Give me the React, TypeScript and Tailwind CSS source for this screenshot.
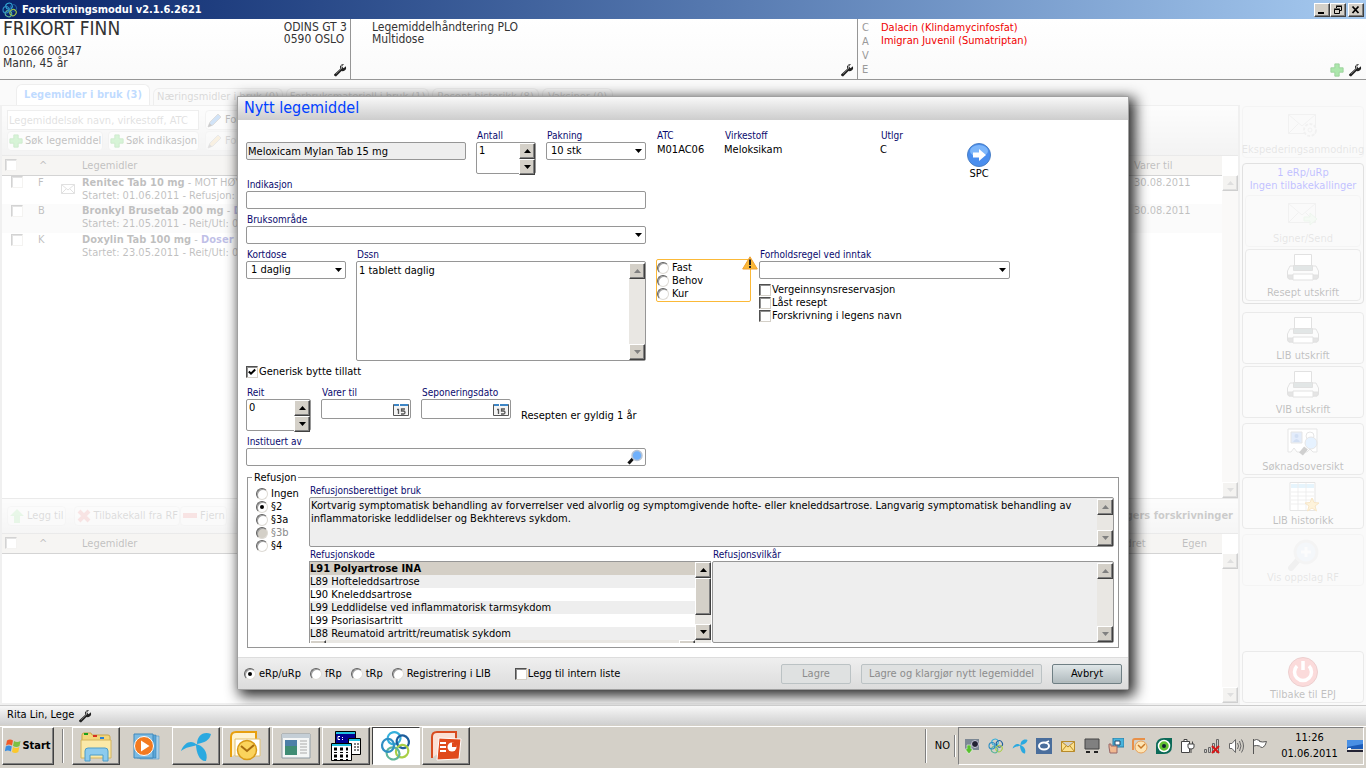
import type { ReactNode } from 'react';

const bevel =
  'border border-t-white border-l-white border-r-[#404040] border-b-[#404040] bg-[#d4d0c8] shadow-[inset_-1px_-1px_0_#808080]';
const box = 'rounded-xs border border-[#969696]';

function Triangle({ down = false, muted = false }: { down?: boolean; muted?: boolean }) {
  return (
    <svg viewBox="0 0 7 4" className="h-1 w-[7px]" fill={muted ? '#808080' : '#000'}>
      <path d={down ? 'M0 0h7L3.5 4z' : 'M0 4h7L3.5 0z'} />
    </svg>
  );
}

function ArrowButton({ down = false, muted = false, label }: { down?: boolean; muted?: boolean; label: string }) {
  return (
    <button type="button" aria-label={label} className={`flex h-4 w-4 shrink-0 items-center justify-center ${bevel}`}>
      <Triangle down={down} muted={muted} />
    </button>
  );
}

function ScrollBar({ thumb = false, muted = false }: { thumb?: boolean; muted?: boolean }) {
  return (
    <div className="flex w-4 shrink-0 flex-col justify-between bg-[#e9e7e3]">
      <div>
        <ArrowButton muted={muted} label="Rull opp" />
        {thumb && <div className={`h-[37px] w-4 ${bevel}`} />}
      </div>
      <ArrowButton down muted={muted} label="Rull ned" />
    </div>
  );
}

function Field({ id, label, className = '', children }: { id?: string; label: string; className?: string; children: ReactNode }) {
  return (
    <div className={`flex flex-col ${className}`}>
      <label htmlFor={id} className="h-[13px] pl-px text-[10px] leading-[13px] whitespace-nowrap text-[#0a0a6e]">
        {label}
      </label>
      {children}
    </div>
  );
}

function Combo({ id, value = '' }: { id: string; value?: string }) {
  return (
    <div className="relative">
      <select id={id} className={`block h-[18px] w-full appearance-none bg-white pl-1 leading-4 ${box}`}>
        <option>{value}</option>
      </select>
      <span className="pointer-events-none absolute inset-y-0 right-1 flex items-center">
        <Triangle down />
      </span>
    </div>
  );
}

function Spinner({ id, value }: { id: string; value: string }) {
  return (
    <div className={`flex h-8 bg-white ${box}`}>
      <input id={id} defaultValue={value} className="h-4 w-0 flex-1 pl-0.5 leading-4 outline-none" />
      <div className="flex flex-col">
        <ArrowButton label="Opp" />
        <ArrowButton down label="Ned" />
      </div>
    </div>
  );
}

function DateInput({ id }: { id: string }) {
  return (
    <div className={`flex h-5 items-center bg-white pr-px ${box}`}>
      <input id={id} className="h-4 w-0 flex-1 outline-none" />
      <svg viewBox="0 0 16 13" className="h-[13px] w-4">
        <path d="M.5 1.500h15v11H.5z" fill="#f4f4f4" stroke="#555" />
        <path d="M1 1h14v2H1z" fill="#3d86c6" />
        <path d="M6 0h1v3H6z" fill="#fff" />
        <path d="M4 6.500h1.500V11M12 6H8.500v2h2q1.500 0 1.500 1.500T10.500 11H8" fill="none" stroke="#555" strokeWidth="1.300" />
      </svg>
    </div>
  );
}

function Radio({ name, label, checked, disabled }: { name: string; label: string; checked?: boolean; disabled?: boolean }) {
  return (
    <label className={`flex h-[13px] items-center gap-[3px] leading-[13px] whitespace-nowrap ${disabled ? 'text-[#8a8a8a]' : ''}`}>
      <span className="grid place-items-center">
        <input
          type="radio"
          name={name}
          defaultChecked={checked}
          disabled={disabled}
          className="peer col-start-1 row-start-1 h-3 w-3 appearance-none rounded-full border border-t-[#606060] border-r-[#dedbd5] border-b-[#dedbd5] border-l-[#606060] bg-white shadow-[inset_1px_1px_0_#a0a0a0] disabled:bg-[#d4d0c8]"
        />
        <span className="pointer-events-none col-start-1 row-start-1 hidden h-1 w-1 rounded-full bg-black peer-checked:block" />
      </span>
      {label}
    </label>
  );
}

function Check({ label, checked }: { label?: string; checked?: boolean }) {
  return (
    <label className="flex h-[13px] items-center gap-px leading-[13px] whitespace-nowrap">
      <span className="grid place-items-center">
        <input
          type="checkbox"
          defaultChecked={checked}
          aria-label={label ?? 'Velg'}
          className="peer col-start-1 row-start-1 h-3 w-3 appearance-none border border-t-[#505050] border-r-[#d4d0c8] border-b-[#d4d0c8] border-l-[#505050] bg-white shadow-[inset_1px_1px_0_#909090]"
        />
        <svg viewBox="0 0 8 8" className="pointer-events-none col-start-1 row-start-1 hidden h-2 w-2 peer-checked:block">
          <path d="M.8 3.500 3 5.700 7.200 1.500" fill="none" stroke="#000" strokeWidth="2" />
        </svg>
      </span>
      {label}
    </label>
  );
}

/* icons */

function Wrench() {
  return (
    <svg viewBox="0 0 14 14" className="h-3.5 w-3.5 shrink-0">
      <path d="M1 11.500 7 6q-.6-3.200 1.500-4.500L11 1 9 3.500l1.500 1.700L13 3.300q.6 2.500-1 4-1.600 1.200-3.500.7L3 13.500q-2.300-.3-2-2z" fill="#222" />
      <path d="m8 6 1-4" stroke="#bbb" />
      <path d="m3 11 5-5" stroke="#666" />
    </svg>
  );
}

function Plus({ className = 'h-3.5 w-3.5' }: { className?: string }) {
  return (
    <svg viewBox="0 0 16 16" className={className}>
      <path d="M5.500 1h5v4.500H15v5h-4.500V15h-5v-4.500H1v-5h4.500z" fill="#5fd45f" stroke="#3aa83a" />
    </svg>
  );
}

function Knot({ className }: { className: string }) {
  const loops = ['#35b0dc', '#1d5d9c', '#a9cf46', '#5fb59a', '#2f8fc4'];
  return (
    <svg viewBox="0 0 32 32" className={className} fill="none" strokeWidth="2.200">
      {loops.map((color, i) => (
        <g key={color} transform={`rotate(${i * 72 - 14} 16 16)`}>
          <ellipse cx="16" cy="8" rx="6.500" ry="6" stroke={color} />
        </g>
      ))}
    </svg>
  );
}

function Telenor({ className }: { className: string }) {
  return (
    <svg viewBox="0 0 32 32" className={className} fill="#2aa9e0">
      <path d="M17 15C12 9 4 12 1 21c5-4 10-4 16-6z" />
      <path d="M17 14C17 6 23 1 31 4c-1 6-7 9-14 10z" />
      <path d="M16 14c6 1 13 8 10 17-6 1-10-8-10-17z" />
    </svg>
  );
}

function Pencil({ color }: { color: string }) {
  return (
    <svg viewBox="0 0 16 16" className="h-4 w-4">
      <path d="m1 15 2-5 8-8 3 3-8 8z" fill={color} stroke="#777" />
      <path d="m1 15 1.500-4L5 13.500z" fill="#333" />
    </svg>
  );
}

function Envelope({ kind }: { kind: 'gear' | 'send' }) {
  return (
    <svg viewBox="0 0 32 28" className="h-7 w-8" fill="none" stroke="#888">
      <path d="M1.500 3.500h27v19h-27zM1.500 3.500 15 15l13.500-11.500M1.500 22.500l10-10M28.500 22.500l-10-10" />
      {kind === 'gear' ? (
        <g fill="#eee">
          <circle cx="23" cy="19" r="6" strokeDasharray="3 1.500" strokeWidth="2" />
          <circle cx="23" cy="19" r="2" />
        </g>
      ) : (
        <path d="M17 17h6v-4l7 6-7 6v-4h-6z" fill="#b0e8b0" stroke="#60b960" />
      )}
    </svg>
  );
}

function Printer() {
  return (
    <svg viewBox="0 0 32 27" className="h-[27px] w-8" stroke="#888">
      <path d="M3 12h26l2.500 5v6q0 2-2 2h-27q-2 0-2-2v-6z" fill="#f4f4f4" />
      <path d="M1 21h6v4H2zM25 21h6l-1 4h-5z" fill="#999" />
      <path d="M7.500.5h17v12h-17z" fill="#fff" />
      <path d="M6.500 11.500h19v5h-19z" fill="#8b9b9b" />
      <path d="M6 20h20v6H6z" fill="#fff" />
    </svg>
  );
}

function Badge() {
  return (
    <svg viewBox="0 0 32 28" className="h-7 w-8" stroke="#999">
      <path d="M1 1h29v23h-4l-3-3-3 3H10l-3-4-3 4H1z" fill="#fff" />
      <path d="M4 4h11v11H4z" fill="#8fb4ee" />
      <circle cx="9.500" cy="8" r="2" fill="#4b7fd0" stroke="none" />
      <path d="M6 14q3.500-6 7 0z" fill="#4b7fd0" stroke="none" />
      <circle cx="23" cy="8" r="4" fill="none" />
      <circle cx="24" cy="15" r="6" fill="#9ccbff" />
      <path d="m19 20-5 6" stroke="#444" strokeWidth="5" />
    </svg>
  );
}

function History() {
  return (
    <svg viewBox="0 0 32 30" className="h-[30px] w-8" stroke="#999">
      <path d="M3 .5h25v28H3z" fill="#fff" />
      <path d="M4 2h23v4H4z" fill="#9cd4f4" stroke="none" />
      <path d="M11 1v27M19 1v27M4 10h23M4 14h23M4 18h23M4 22h23" stroke="#bbb" />
      <path d="m25 16 2 4.500 5 .5-4 3 1.500 5-4.500-3-4.500 3 1.500-5-4-3 5-.5z" fill="#fbd070" stroke="#e09a20" />
    </svg>
  );
}

function Lookup() {
  return (
    <svg viewBox="0 0 32 32" className="h-8 w-8">
      <path d="m12 20-8 9" stroke="#777" strokeWidth="6" strokeLinecap="round" />
      <circle cx="19" cy="13" r="11" fill="#a8c4f0" stroke="#aaa" strokeWidth="3" />
      <path d="M19 8v10M14 13h10" stroke="#fff" strokeWidth="3" />
    </svg>
  );
}

function Power() {
  return (
    <svg viewBox="0 0 32 32" className="h-8 w-8" fill="none">
      <circle cx="16" cy="16" r="14.500" fill="#f07070" stroke="#b04040" />
      <path d="M10 10a8.500 8.500 0 1 0 12 0M16 5v9" stroke="#fff" strokeWidth="3.500" />
    </svg>
  );
}

/* window parts */

function TitleBar() {
  const btn = `flex h-3.5 w-4 items-center justify-center ${bevel}`;
  return (
    <div className="flex h-[19px] items-center bg-linear-to-r from-[#0a246a] to-[#a6caf0] pr-0.5 pl-0.5 text-white">
      <Knot className="h-4 w-4" />
      <h1 className="flex-1 pl-1 text-[11px] leading-4 font-bold">Forskrivningsmodul v2.1.6.2621</h1>
      <button type="button" aria-label="Minimer" className={btn}>
        <svg viewBox="0 0 10 10" className="h-2.5 w-2.5"><path d="M1 7h6v2H1z" /></svg>
      </button>
      <button type="button" aria-label="Gjenopprett" className={btn}>
        <svg viewBox="0 0 10 10" className="h-2.5 w-2.5" fill="none" stroke="#000">
          <path d="M3.500 3V1.500h5v4H7M3 1h6M1.500 4.500h5v4h-5zM1 4h6" />
        </svg>
      </button>
      <button type="button" aria-label="Lukk" className={`ml-0.5 ${btn}`}>
        <svg viewBox="0 0 10 10" className="h-2.5 w-2.5" stroke="#000" strokeWidth="1.800"><path d="m1.500 1.500 6 6.500M7.500 1.500 1.500 8" /></svg>
      </button>
    </div>
  );
}

function PatientHeader() {
  return (
    <header className="flex h-[61px] border-b border-[#969696] bg-linear-to-b from-white to-[#fafafa] text-[12px] leading-3 text-[#333]">
      <div className="flex w-[351px] justify-between border-r border-[#969696] pr-[3px] pl-[3px]">
        <div>
          <h2 className="text-[19px] leading-[18px]">FRIKORT FINN</h2>
          <p className="pt-2">010266 00347</p>
          <p>Mann, 45 år</p>
        </div>
        <div className="flex flex-col items-end justify-between pt-0.5 pb-0.5">
          <p>ODINS GT 3<br />0590 OSLO</p>
          <Wrench />
        </div>
      </div>
      <div className="flex w-[507px] items-end justify-between border-r border-[#969696] pr-[3px] pb-0.5 pl-[21px]">
        <p className="self-start pt-0.5">Legemiddelhåndtering PLO<br />Multidose</p>
        <Wrench />
      </div>
      <div className="flex flex-1 gap-[11px] pr-1 pl-1 text-[11px]">
        <div className="flex w-2 flex-col pt-0.5 leading-3.5 text-[#999]">
          <span>C</span><span>A</span><span>V</span><span>E</span>
        </div>
        <p className="flex-1 pt-0.5 leading-[13px] text-[#f00000]">
          Dalacin (Klindamycinfosfat)<br />Imigran Juvenil (Sumatriptan)
        </p>
        <div className="flex items-end gap-1 pb-0.5">
          <Plus className="h-3.5 w-3.5 opacity-50" />
          <Wrench />
        </div>
      </div>
    </header>
  );
}

const tabs = [
  { label: 'Næringsmidler i bruk (0)', width: 'w-[130px]' },
  { label: 'Forbruksmateriell i bruk (1)', width: 'w-[143px]' },
  { label: 'Resept historikk (8)', width: 'w-[107px]' },
  { label: 'Vaksiner (0)', width: 'w-[71px]' },
];

const drugs = [
  { type: 'F', name: 'Renitec Tab 10 mg', extra: 'MOT HØYT', line: 'Startet: 01.06.2011 - Refusjon:', until: '30.08.2011', mail: true },
  { type: 'B', name: 'Bronkyl Brusetab 200 mg', dose: 'Doser', line: 'Startet: 21.05.2011 - Reit/Utl: 0', until: '30.08.2011' },
  { type: 'K', name: 'Doxylin Tab 100 mg', dose: 'Doser', line: 'Startet: 23.05.2011 - Reit/Utl: 0', until: '' },
];

type Column = { title: string; width: string };

function DrugTable({ rows, last }: { rows: typeof drugs; last: Column[] }) {
  return (
    <table className="w-full table-fixed text-left leading-[13px]">
      <colgroup>
        <col className="w-[33px]" />
        <col className="w-[26px]" />
        <col className="w-[19px]" />
        <col />
        {last.map((c) => <col key={c.title} className={c.width} />)}
      </colgroup>
      <thead>
        <tr className="h-[19px] border-b border-[#555] bg-[#dcd8d0]">
          <th className="pl-[3px]"><Check /></th>
          <th className="pl-1 font-normal">^</th>
          <th />
          <th className="pl-0.5 font-normal">Legemidler</th>
          {last.map((c) => <th key={c.title} className="pl-1 font-normal">{c.title}</th>)}
        </tr>
      </thead>
      <tbody>
        {rows.map((d, i) => (
          <tr key={d.name} className={`h-[29px] align-top ${i % 2 ? 'bg-[#eee]' : 'bg-white'}`}>
            <td className="pl-[9px]"><Check /></td>
            <td className="pl-[3px]">{d.type}</td>
            <td className="pt-2">
              {d.mail && (
                <svg viewBox="0 0 14 10" className="h-2.5 w-3.5" fill="none" stroke="#888"><path d="M.5.5h13v9H.5zL7 6 13.500.5M.5 9.500 5 5M13.500 9.500 9 5" /></svg>
              )}
            </td>
            <td className="overflow-hidden pl-0.5 whitespace-nowrap">
              <b>{d.name}</b> - {d.extra}<b className="text-[#0000a0]">{d.dose}</b>
              <br />{d.line}
            </td>
            {last.map((c) => <td key={c.title} className="pl-1">{d.until}</td>)}
          </tr>
        ))}
      </tbody>
    </table>
  );
}

function ToolButton({ icon, children, muted = false }: { icon: ReactNode; children: ReactNode; muted?: boolean }) {
  return (
    <button type="button" className={`flex h-5 items-center gap-0.5 rounded-sm border border-[#ccc] bg-[#f4f4f4] px-px whitespace-nowrap ${muted ? 'opacity-50' : ''}`}>
      {icon}{children}
    </button>
  );
}

function MedicationPanel() {
  return (
    <div className="flex min-w-0 flex-1 flex-col">
      <div className="flex items-end gap-[3px] pl-4">
        <button type="button" className="h-[21px] w-[134px] rounded-t-md border border-b-0 border-[#bbb] bg-white text-[11px] font-bold whitespace-nowrap text-[#0070ff]">
          Legemidler i bruk (3)
        </button>
        {tabs.map((t) => (
          <button key={t.label} type="button" className={`h-[17px] rounded-t-md border border-b-0 border-[#bbb] text-[11px] leading-4 whitespace-nowrap text-[#666] ${t.width}`}>
            {t.label}
          </button>
        ))}
      </div>
      <div className="flex flex-1 flex-col border-x-2 border-t border-b-2 border-[#c4c4c4] bg-white">
        <div className="flex h-[49px] gap-1.5 bg-linear-to-b from-[#f4f4f4] to-[#d0d0d0] pt-1 pl-[5px]">
          <div className="flex w-48 flex-col gap-px">
            <input placeholder="Legemiddelsøk navn, virkestoff, ATC" aria-label="Legemiddelsøk" className="h-5 w-full border border-[#bbb] bg-white pl-px placeholder:text-[#888]" />
            <div className="flex justify-between">
              <ToolButton icon={<Plus />}>Søk legemiddel</ToolButton>
              <ToolButton icon={<Plus />}>Søk indikasjon</ToolButton>
            </div>
          </div>
          <div className="flex flex-col gap-px">
            <ToolButton icon={<Pencil color="#4a90e0" />}>Forny</ToolButton>
            <ToolButton muted icon={<Pencil color="#f0b040" />}>Forny</ToolButton>
          </div>
        </div>
        <div className="flex h-[343px] border-t border-[#aaa]">
          <div className="min-w-0 flex-1"><DrugTable rows={drugs} last={[{ title: 'Varer til', width: 'w-[92px]' }]} /></div>
          <div className="flex pt-[19px]"><ScrollBar muted /></div>
        </div>
        <div className="flex h-[35px] items-center gap-2 border-t border-[#aaa] bg-linear-to-b from-[#f4f4f4] to-[#d8d8d8] px-[5px]">
          <ToolButton muted icon={<svg viewBox="0 0 16 16" className="h-4 w-4"><path d="m8 1 7 7h-4v7H5V8H1z" fill="#5fd45f" /></svg>}>Legg til</ToolButton>
          <div className="flex">
            <ToolButton muted icon={<svg viewBox="0 0 16 16" className="h-4 w-4"><path d="m3 3 10 10M13 3 3 13" stroke="#e04040" strokeWidth="4" /></svg>}>Tilbakekall fra RF</ToolButton>
            <ToolButton muted icon={<svg viewBox="0 0 16 16" className="h-4 w-4"><path d="M1 5h14v5H1z" fill="#e04040" /></svg>}>Fjern</ToolButton>
          </div>
          <b className="ml-auto text-[11px] text-[#333]">Andre legers forskrivninger</b>
        </div>
        <div className="flex flex-1 border-t border-[#aaa]">
          <div className="min-w-0 flex-1">
            <DrugTable rows={[]} last={[{ title: 'Endret', width: 'w-[69px]' }, { title: 'Egen', width: 'w-[44px]' }]} />
          </div>
          <div className="flex pt-[19px]"><ScrollBar muted /></div>
        </div>
      </div>
    </div>
  );
}

function SideButton({ icon, label, muted = false }: { icon: ReactNode; label: string; muted?: boolean }) {
  return (
    <button type="button" className={`flex h-[52px] w-full flex-col items-center justify-between rounded-sm border border-[#aaa] bg-[#f0f0f0] pt-1 pb-px leading-[13px] whitespace-nowrap ${muted ? 'opacity-35' : ''}`}>
      {icon}
      <span>{label}</span>
    </button>
  );
}

function SideBar() {
  return (
    <div className="flex w-[122px] flex-col pt-[22px] pb-0.5">
      <SideButton muted icon={<Envelope kind="gear" />} label="Ekspederingsanmodning" />
      <div className="mt-[5px] rounded-sm border border-[#888] p-0.5">
        <p className="pb-[3px] text-center leading-[13px] whitespace-nowrap text-[#0000ff]">1 eRp/uRp<br />Ingen tilbakekallinger</p>
        <div className="flex flex-col gap-0.5">
          <SideButton muted icon={<Envelope kind="send" />} label="Signer/Send" />
          <SideButton icon={<Printer />} label="Resept utskrift" />
        </div>
      </div>
      <div className="mt-2 flex flex-col gap-0.5">
        <SideButton icon={<Printer />} label="LIB utskrift" />
        <SideButton icon={<Printer />} label="VIB utskrift" />
      </div>
      <div className="mt-[5px] flex flex-col gap-0.5">
        <SideButton icon={<Badge />} label="Søknadsoversikt" />
        <SideButton icon={<History />} label="LIB historikk" />
      </div>
      <div className="mt-[5px]"><SideButton muted icon={<Lookup />} label="Vis oppslag RF" /></div>
      <div className="mt-auto"><SideButton icon={<Power />} label="Tilbake til EPJ" /></div>
    </div>
  );
}

const codes = [
  'L91 Polyartrose INA',
  'L89 Hofteleddsartrose',
  'L90 Kneleddsartrose',
  'L99 Leddlidelse ved inflammatorisk tarmsykdom',
  'L99 Psoriasisartritt',
  'L88 Reumatoid artritt/reumatisk sykdom',
];

function Refund() {
  return (
    <fieldset className="mt-px ml-px flex min-w-0 border border-[#969696] pr-1 pb-1">
      <legend className="ml-1 px-0.5 leading-[13px]">Refusjon</legend>
      <div className="flex w-[61px] shrink-0 flex-col pt-[3px] pl-2">
        <Radio name="refusjon" label="Ingen" />
        <Radio name="refusjon" label="§2" checked />
        <Radio name="refusjon" label="§3a" />
        <Radio name="refusjon" label="§3b" disabled />
        <Radio name="refusjon" label="§4" />
      </div>
      <div className="flex min-w-0 flex-1 flex-col gap-px">
        <Field id="bruk" label="Refusjonsberettiget bruk">
          <div className={`flex h-[50px] bg-[#eee] pt-px ${box}`}>
            <textarea
              id="bruk"
              readOnly
              className="min-w-0 flex-1 resize-none overflow-hidden pl-px leading-[13px] outline-none"
              defaultValue="Kortvarig symptomatisk behandling av forverrelser ved alvorlig og symptomgivende hofte- eller kneleddsartrose. Langvarig symptomatisk behandling av inflammatoriske leddlidelser og Bekhterevs sykdom."
            />
            <ScrollBar muted />
          </div>
        </Field>
        <div className="flex gap-px">
          <Field label="Refusjonskode" className="min-w-0 flex-1">
            <div className="h-[82px] overflow-hidden border-t border-l border-[#969696]">
              <div className="flex">
                <ul className="min-w-0 flex-1 leading-[13px] whitespace-nowrap">
                  {codes.map((code, i) => (
                    <li key={code} className={i === 0 ? 'bg-[#d4cfc6] font-bold' : i % 2 ? 'bg-[#eee]' : 'bg-white'}>{code}</li>
                  ))}
                </ul>
                <ScrollBar thumb />
              </div>
              <div className="flex justify-between bg-[#e9e7e3] pr-4">
                <div className={`h-4 w-4 ${bevel}`} />
                <div className={`h-4 w-4 ${bevel}`} />
              </div>
            </div>
          </Field>
          <Field id="vilkar" label="Refusjonsvilkår" className="min-w-0 flex-1">
            <div className={`flex h-[82px] bg-[#eee] pt-px ${box}`}>
              <textarea id="vilkar" readOnly className="min-w-0 flex-1 resize-none outline-none" />
              <ScrollBar muted />
            </div>
          </Field>
        </div>
      </div>
    </fieldset>
  );
}

function Dialog() {
  const footBtn = 'h-5 rounded-xs border text-center leading-4 whitespace-nowrap';
  return (
    <section
      role="dialog"
      aria-label="Nytt legemiddel"
      className="w-[892px] rounded-b-xs border border-[#a0a0a0] bg-white shadow-[4px_4px_14px_2px_rgba(0,0,0,0.85)]">
      <h2 className="h-[23px] bg-linear-to-b from-[#f8f8f8] to-[#cdcdcd] pl-1.5 text-[16px] leading-[21px] text-[#0040ff]">
        Nytt legemiddel
      </h2>

      <div className="flex flex-col gap-1 pt-[9px] pr-[9px] pb-[9px] pl-2">
        <div className="flex h-[45px] items-start gap-2.5">
          <input aria-label="Legemiddel" readOnly defaultValue="Meloxicam Mylan Tab 15 mg" className={`mt-[13px] h-[18px] w-[220px] bg-[#eee] pl-px ${box}`} />
          <Field id="antall" label="Antall" className="w-[60px]"><Spinner id="antall" value="1" /></Field>
          <Field id="pakning" label="Pakning" className="w-[100px]"><Combo id="pakning" value="10 stk" /></Field>
          <Field label="ATC" className="w-[58px]"><p className="pl-px leading-4">M01AC06</p></Field>
          <Field label="Virkestoff" className="w-[146px]"><p className="leading-4">Meloksikam</p></Field>
          <Field label="Utlgr" className="w-[77px]"><p className="leading-4">C</p></Field>
          <button type="button" className="mt-3.5 flex flex-col items-center leading-[14px]">
            <svg viewBox="0 0 24 24" className="h-6 w-6">
              <circle cx="12" cy="12" r="11.500" fill="#4a8eee" stroke="#4a7fc4" />
              <ellipse cx="12" cy="8" rx="9" ry="6" fill="#7db6fa" />
              <path d="M6 9.500h6V6l7 6-7 6v-3.500H6z" fill="#fff" />
            </svg>
            SPC
          </button>
        </div>
        <Field id="indikasjon" label="Indikasjon" className="w-[400px]">
          <input id="indikasjon" className={`h-[18px] ${box}`} />
        </Field>
        <Field id="omrade" label="Bruksområde" className="w-[400px]"><Combo id="omrade" /></Field>

        <div className="flex gap-2.5">
          <Field id="kortdose" label="Kortdose" className="w-[100px]"><Combo id="kortdose" value="1 daglig" /></Field>
          <Field id="dssn" label="Dssn" className="w-[290px]">
            <div className={`flex h-[100px] pt-px ${box}`}>
              <textarea id="dssn" defaultValue="1 tablett daglig" className="min-w-0 flex-1 resize-none pl-0.5 leading-4 outline-none" />
              <ScrollBar muted />
            </div>
          </Field>
          <div className="flex gap-2">
            <div className="relative mt-[11px] flex h-[43px] w-[95px] flex-col rounded-xs border border-[#fbb938] pt-px">
              <Radio name="type" label="Fast" />
              <Radio name="type" label="Behov" />
              <Radio name="type" label="Kur" />
              <svg viewBox="0 0 16 14" className="absolute -top-1 -right-2 h-3.5 w-4">
                <path d="M8 .8 15.300 13H.7z" fill="#fbb938" stroke="#f0a030" strokeLinejoin="round" />
                <path d="M8 3.500v5.500M8 10v2" stroke="#222" strokeWidth="2" />
              </svg>
            </div>
            <div>
              <Field id="forhold" label="Forholdsregel ved inntak" className="w-[251px]"><Combo id="forhold" /></Field>
              <div className="pt-1">
                <Check label="Vergeinnsynsreservasjon" />
                <Check label="Låst resept" />
                <Check label="Forskrivning i legens navn" />
              </div>
            </div>
          </div>
        </div>

        <Check label="Generisk bytte tillatt" checked />

        <div className="flex gap-2.5 pt-1">
          <Field id="reit" label="Reit" className="w-[65px]"><Spinner id="reit" value="0" /></Field>
          <Field id="varer" label="Varer til" className="w-[90px]"><DateInput id="varer" /></Field>
          <Field id="sepo" label="Seponeringsdato" className="w-[90px]"><DateInput id="sepo" /></Field>
          <p className="pt-[23px] leading-[14px]">Resepten er gyldig 1 år</p>
        </div>
        <Field id="instituert" label="Instituert av" className="w-[400px]">
          <div className={`flex h-[18px] items-center pr-0.5 ${box}`}>
            <input id="instituert" className="h-4 flex-1 outline-none" />
            <svg viewBox="0 0 16 16" className="h-4 w-4">
              <path d="m6.500 9-5 5.500" stroke="#111" strokeWidth="3" />
              <circle cx="10" cy="6.500" r="5" fill="#6fb0fb" stroke="#b8c4d4" strokeWidth="1.500" />
            </svg>
          </div>
        </Field>
        <Refund />
      </div>

      <div className="flex h-8 items-center border-t border-[#ddd] bg-linear-to-b from-[#efefef] to-[#dcdcdc] pr-1.5 pl-1.5">
        <div className="flex gap-[9px]">
          <Radio name="resept" label="eRp/uRp" checked />
          <Radio name="resept" label="fRp" />
          <Radio name="resept" label="tRp" />
          <Radio name="resept" label="Registrering i LIB" />
        </div>
        <div className="pl-6"><Check label="Legg til intern liste" /></div>
        <div className="ml-auto flex gap-2.5">
          <button type="button" className={`w-[70px] border-[#bbc2c4] bg-[#dfe1e1] text-[#8c8c8c] ${footBtn}`}>Lagre</button>
          <button type="button" className={`w-[181px] border-[#bbc2c4] bg-[#dfe1e1] text-[#8c8c8c] ${footBtn}`}>Lagre og klargjør nytt legemiddel</button>
          <button type="button" className={`w-[70px] border-[#6f7f84] bg-linear-to-b from-[#dfe6e8] to-[#b0babd] ${footBtn}`}>Avbryt</button>
        </div>
      </div>
    </section>
  );
}

const taskIcons: { name: string; state?: 'flat' | 'active'; icon: ReactNode }[] = [
  {
    name: 'Explorer',
    icon: (
      <svg viewBox="0 0 32 32" className="h-8 w-8">
        <path d="M2 5q0-2 2-2h7l1 2h16q2 0 2 2v20H2z" fill="#f3d67a" stroke="#c9a54a" />
        <path d="M1 10h30v18H1z" fill="#fbe9a8" stroke="#d4b45c" />
        <path d="M4 3h4v2H4z" fill="#1ca01c" /><path d="M13 5h4v2h-4z" fill="#d83020" /><path d="M20 7h4v2h-4z" fill="#2880d8" />
        <path d="M5 31V21q0-3 3-3h17q3 0 3 3v10h-5v-6H10v6z" fill="#8ccbee" stroke="#4c9cc8" />
      </svg>
    ),
  },
  {
    name: 'Media Player',
    state: 'flat',
    icon: (
      <svg viewBox="0 0 32 32" className="h-8 w-8">
        <path d="M10 6h19v23H10z" fill="#a8d0ea" stroke="#3f88bc" strokeWidth=".5" /><path d="M7 5h19v23H7z" fill="#5ba6d8" stroke="#2f78ac" strokeWidth=".5" />
        <path d="M4 4h19v24H4z" fill="#7cbbe2" stroke="#3f88bc" />
        <circle cx="14" cy="16" r="9.500" fill="#f37a20" stroke="#fff" /><path d="M11 10.500v11l8.500-5.500z" fill="#fff" />
      </svg>
    ),
  },
  { name: 'Telenor', icon: <Telenor className="h-8 w-8" /> },
  {
    name: 'Outlook',
    icon: (
      <svg viewBox="0 0 32 32" className="h-8 w-8">
        <path d="M1 27V7q0-5 5-5h20v8" fill="#fff3d0" stroke="#e8a010" strokeWidth="2" />
        <path d="M5 9h25v17H5z" fill="#fff" stroke="#e0c070" />
        <circle cx="17" cy="20" r="9.500" fill="#fbd35c" stroke="#d89a18" strokeWidth="1.500" />
        <path d="m11 16 6 5 7-6" fill="none" stroke="#a86c10" strokeWidth="2" />
      </svg>
    ),
  },
  {
    name: 'Program',
    icon: (
      <svg viewBox="0 0 32 32" className="h-8 w-8">
        <path d="M2 4h28v24H2z" fill="#f4f6f6" stroke="#8f9ba4" /><path d="M2 4h28v4H2z" fill="#c4ced6" />
        <path d="M5 10h12v15H5z" fill="#3f8c74" /><path d="M5 10h12v6H5z" fill="#4d7fa8" />
        <path d="M20 11h7M20 14h7M20 17h7M20 20h7M20 23h7" stroke="#aaa" />
      </svg>
    ),
  },
  {
    name: 'Kommandolinje',
    icon: (
      <svg viewBox="0 0 32 32" className="h-8 w-8">
        <path d="M5.500 1.500h20v13h-20z" fill="#000090" stroke="#000" /><path d="M6 2h19v2H6z" fill="#20c0e0" />
        <path d="M10 6.500H8v3h2M12 7.500h1M12 9.500h1" stroke="#fff" fill="none" />
        <path d="M18.500 8.500h12v16h-12z" fill="#fff" stroke="#000" /><path d="M19 9h11v2H19z" fill="#20c0e0" />
        <path d="M24 14h5M24 17h5M24 20h5" stroke="#000" strokeDasharray="2 1" />
        <path d="M1.500 13.500h20v17h-20z" fill="#fff" stroke="#000" /><path d="M2 14h19v2H2z" fill="#20c0e0" />
        <path d="M4 19h14M4 26h14" stroke="#000" strokeWidth="3" strokeDasharray="3 3" /><path d="M4 22.500h14M4 29.500h14" stroke="#000" strokeDasharray="3 3" />
      </svg>
    ),
  },
  { name: 'Forskrivningsmodul', state: 'active', icon: <Knot className="h-8 w-8" /> },
  {
    name: 'PowerPoint',
    icon: (
      <svg viewBox="0 0 32 32" className="h-8 w-8">
        <path d="M2 28V7q0-5 5-5h19v8" fill="#fbe0d4" stroke="#d84c20" strokeWidth="2" />
        <path d="m9 8 22 1-2 20-22 1z" fill="#e04a1c" stroke="#fff" />
        <path d="M10 13h6M10 17h6M10 21h6" stroke="#fff" strokeWidth="2" /><circle cx="22" cy="17" r="4.500" fill="#fff" /><path d="M22 17v-4.500h4.500V17z" fill="#e04a1c" />
      </svg>
    ),
  },
];

const trayIcons: ReactNode[] = [
  <svg viewBox="0 0 16 16" className="h-4 w-4"><path d="M1 1h14v11H1z" fill="#7c8894" /><circle cx="11" cy="6" r="3.500" fill="#223" stroke="#ccd" /><path d="M3 7h4v4h2l-4 5-4-5h2z" fill="#58c030" stroke="#fff" strokeWidth=".5" /></svg>,
  <Knot className="h-4 w-4" />,
  <Telenor className="h-4 w-4" />,
  <svg viewBox="0 0 16 16" className="h-4 w-4"><path d="M0 0h16v16H0z" fill="#4a6e9c" /><ellipse cx="8" cy="8" rx="5" ry="3.500" fill="none" stroke="#fff" strokeWidth="2" /><path d="M13 3 9 5" stroke="#fff" strokeWidth="1.500" /></svg>,
  <svg viewBox="0 0 16 16" className="h-4 w-4"><path d="M1.500 3.500h13v10h-13zL8 9l6.500-5.500M1.500 13.500 6 8M14.500 13.500 10 8" fill="#fce08c" stroke="#b88a28" /></svg>,
  <svg viewBox="0 0 16 16" className="h-4 w-4"><path d="M1 1h14v10H1z" fill="#808080" stroke="#444" /><path d="M2 13h4v2H2zM10 13h4v2h-4z" fill="#222" /></svg>,
  <svg viewBox="0 0 16 16" className="h-4 w-4"><path d="M5 0h11v9H5z" fill="#48b4dc" stroke="#2a7ca4" /><path d="M7 3h5v4H7z" fill="#fff" stroke="#246" /><path d="M1 9V6h2v2h6v7H2z" fill="#f0b890" stroke="#966" /></svg>,
  <svg viewBox="0 0 16 16" className="h-4 w-4"><path d="M1 12V3q0-2 2-2h10" fill="none" stroke="#e89048" strokeWidth="2" /><circle cx="9" cy="9" r="6" fill="#fde4b4" stroke="#e8a058" /><path d="m6 7 3 3 4-4" fill="none" stroke="#c87828" strokeWidth="1.500" /></svg>,
  <svg viewBox="0 0 16 16" className="h-4 w-4"><path d="M0 8q0-8 8-8h8v8q0 8-8 8H0z" fill="#0c6a58" /><circle cx="8" cy="8" r="5.500" fill="#60c030" stroke="#fff" strokeWidth="1.500" /><circle cx="8" cy="8" r="2" fill="#123" /></svg>,
  <svg viewBox="0 0 16 16" className="h-4 w-4" fill="#fff" stroke="#444"><path d="M1.500 3.500h8v11h-8zM4 1.500h3v2H4z" /><path d="M8 6h6v3q0 2-3 2t-3-2zM9.500 6V3.500M12.500 6V3.500M11 11v4" /></svg>,
  <svg viewBox="0 0 16 16" className="h-4 w-4"><path d="M.5 11.500h2v3h-2zM4.500 9.500h2v5h-2zM8.500 5.500h2v9h-2zM12.500 1.500h2v13h-2z" fill="#ccc" stroke="#666" /><path d="m8 8 7 7M15 8l-7 7" stroke="#d81818" strokeWidth="2" /></svg>,
  <svg viewBox="0 0 16 16" className="h-4 w-4" fill="none" stroke="#666"><path d="M1.500 5.500H4l3.500-4v13L4 10.500H1.500z" fill="#fff" /><path d="M9.500 5q2 3 0 6M11.500 3q3 5 0 10M13.500 1.500q4 6.500 0 13" /></svg>,
  <svg viewBox="0 0 16 16" className="h-4 w-4" fill="#fff" stroke="#555"><path d="M1.500 1v15M1.500 2.500q3-2 6 0v1q3 1 7 0-1 5-4 6-2 0-3-1.500-3-1-6 0z" /></svg>,
];

function Divider() {
  return <div className="w-0.5 shrink-0 self-stretch border-r border-l border-r-white border-l-[#808080]" />;
}

function TaskBar() {
  return (
    <footer className="flex h-[43px] items-center border-t border-[#d4d0c8] bg-[#d4d0c8] pr-0.5 pb-0.5 pl-0.5 shadow-[inset_0_1px_0_#fff]">
      <button type="button" className={`flex h-[38px] w-[52px] items-center justify-center gap-px text-[11px] font-bold ${bevel}`}>
        <svg viewBox="0 0 16 16" className="h-4 w-4 shrink-0">
          <path d="M2 2.500q3-2 6 0L7 7.500q-3-2-6 0z" fill="#f05a28" /><path d="M9 3q3 2 6.500 0l-1 5q-3 2-6.500 0z" fill="#7cc043" />
          <path d="M.8 8.500q3-2 6 0l-1 5q-3-2-6 0z" fill="#3b8ee0" /><path d="M8 9q3 2 6.300 0l-1 5q-3 2-6.300 0z" fill="#fbc82c" />
        </svg>
        Start
      </button>
      <div className="flex h-[34px] pr-2 pl-2"><Divider /></div>
      <div className="flex gap-0.5">
        {taskIcons.map((t) => (
          <button
            key={t.name}
            type="button"
            aria-label={t.name}
            className={`flex h-[38px] w-12 items-center justify-center ${
              t.state === 'flat' ? '' : t.state === 'active' ? 'border border-t-[#404040] border-r-white border-b-white border-l-[#404040] bg-white' : bevel
            }`}>
            {t.icon}
          </button>
        ))}
      </div>
      <div className="ml-auto flex h-[34px] items-center gap-2">
        <Divider />
        <span>NO</span>
      </div>
      <div className="flex h-[22px] pr-0.5 pl-1"><Divider /></div>
      <div className="flex h-[38px] items-center gap-2 border border-t-[#808080] border-r-white border-b-white border-l-[#808080] pl-[5px]">
        {trayIcons.map((icon, i) => <span key={i}>{icon}</span>)}
        <p className="w-[63px] pl-1 text-center leading-4">11:26<br />01.06.2011</p>
        <svg viewBox="0 0 16 14" className="h-3.5 w-4"><path d="M0 1h16v9H0z" fill="#1c5cb8" /><path d="M0 1h16v4L0 8z" fill="#4a90e4" /><path d="M0 11h16v2H0z" fill="#223" /><path d="M1 9h3v2H1z" fill="#fff" /></svg>
      </div>
    </footer>
  );
}

export default function App() {
  return (
    <div className="flex min-h-screen flex-col bg-[#ebebeb] font-['DejaVu_Sans_Condensed','DejaVu_Sans',sans-serif] text-[11px] text-black">
      <TitleBar />
      <PatientHeader />
      <main className="relative flex flex-1">
        <div className="flex w-full gap-0.5 pt-1 pr-0.5">
          <MedicationPanel />
          <SideBar />
        </div>
        <div className="absolute inset-0 flex items-start justify-center overflow-hidden bg-white/75 pt-4">
          <Dialog />
        </div>
      </main>
      <div className="flex h-5 items-center gap-1 border-t border-[#ccc] bg-linear-to-b from-[#f8f8f8] to-[#cfcfcf] pl-[7px]">
        <span>Rita Lin, Lege</span>
        <Wrench />
      </div>
      <TaskBar />
    </div>
  );
}
